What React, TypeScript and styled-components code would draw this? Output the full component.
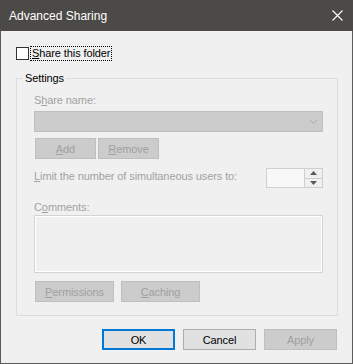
import React from "react";
import styled, { createGlobalStyle } from "styled-components";

const GlobalStyle = createGlobalStyle`
  html, body {
    margin: 0;
    padding: 0;
    background: #ffffff;
  }
  * {
    box-sizing: border-box;
  }
`;

const FONT = `"Liberation Sans", Arial, sans-serif`;

const Window = styled.div`
  width: 353px;
  height: 364px;
  display: flex;
  flex-direction: column;
  font-family: ${FONT};
  font-size: 11px;
`;

const TitleBar = styled.div`
  height: 31px;
  display: flex;
  align-items: center;
  justify-content: space-between;
  padding: 0 10px 0 9px;
  background: #4b4a47;
  color: #ffffff;
  font-size: 12px;
`;

const Body = styled.div`
  flex: 1;
  display: flex;
  flex-direction: column;
  background: #f0f0f0;
  border: 1px solid #5c5c5c;
  border-top: none;
  letter-spacing: -0.1px;
`;

const CheckRow = styled.div`
  display: flex;
  align-items: center;
  margin: 15px 0 0 15px;
  height: 15px;
`;

const CheckBox = styled.span`
  width: 13px;
  height: 13px;
  border: 1px solid #333333;
  background: #ffffff;
`;

const FocusLabel = styled.span`
  margin-left: 1px;
  padding: 0 1px;
  line-height: 13px;
  border: 1px dotted #000000;
  color: #000000;
`;

const Group = styled.fieldset`
  margin: 10px 0 0 15px;
  width: 322px;
  padding: 9px 14px 13px 17px;
  border: 1px solid #dcdcdc;
  display: flex;
  flex-direction: column;
`;

const Legend = styled.legend`
  margin-left: -11px;
  padding: 0 2px;
  line-height: 14px;
  font-size: 11px;
  color: #000000;
`;

const Label = styled.div<{ $top?: number }>`
  margin-top: ${(p) => p.$top ?? 0}px;
  line-height: 13px;
  color: #a2a2a2;
`;

const Combo = styled.div`
  margin-top: 4px;
  height: 21px;
  background: #cccccc;
  border: 1px solid #bfbfbf;
  display: flex;
  align-items: center;
  justify-content: flex-end;
  padding-right: 4px;
`;

const ButtonRow = styled.div<{ $gap: number; $top: number }>`
  display: flex;
  gap: ${(p) => p.$gap}px;
  margin-top: ${(p) => p.$top}px;
  padding-left: 1px;
`;

const DisabledButton = styled.div<{ $w: number }>`
  width: ${(p) => p.$w}px;
  height: 21px;
  display: flex;
  align-items: center;
  justify-content: center;
  background: #cccccc;
  border: 1px solid #bfbfbf;
  color: #a0a0a0;
`;

const LimitRow = styled.div`
  margin-top: 9px;
  height: 20px;
  display: flex;
  justify-content: space-between;
  align-items: flex-start;
`;

const LimitText = styled.span`
  margin-top: 2px;
  line-height: 13px;
  color: #a2a2a2;
  white-space: nowrap;
`;

const Spin = styled.div`
  flex-shrink: 0;
  width: 57px;
  height: 20px;
  display: flex;
  border: 1px solid #cfcfcf;
  background: #f8f8f8;
`;

const SpinField = styled.div`
  flex: 1;
`;

const SpinArrows = styled.div`
  width: 18px;
  display: flex;
  flex-direction: column;
  border-left: 1px solid #cfcfcf;
  background: #f0f0f0;
`;

const SpinHalf = styled.div<{ $bottom?: boolean }>`
  flex: 1;
  display: flex;
  align-items: center;
  justify-content: center;
  border-top: ${(p) => (p.$bottom ? "1px solid #cfcfcf" : "none")};
`;

const TextArea = styled.div`
  margin-top: 1px;
  height: 58px;
  border: 1px solid #d4d4d4;
  box-shadow: inset 0 0 0 1px #ffffff;
  background: #f0f0f0;
`;

const Footer = styled.div`
  margin-top: 13px;
  display: flex;
  justify-content: flex-end;
  gap: 8px;
  padding-right: 15px;
`;

const DialogButton = styled.div<{ $default?: boolean; $disabled?: boolean }>`
  width: 73px;
  height: 21px;
  display: flex;
  align-items: center;
  justify-content: center;
  background: ${(p) => (p.$disabled ? "#cccccc" : "#e1e1e1")};
  border: ${(p) =>
    p.$default
      ? "2px solid #0078d7"
      : p.$disabled
      ? "1px solid #bfbfbf"
      : "1px solid #adadad"};
  color: ${(p) => (p.$disabled ? "#a0a0a0" : "#000000")};
`;

const U = styled.span`
  text-decoration: underline;
`;

const CloseIcon = () => (
  <svg width="11" height="11" viewBox="0 0 11 11">
    <path d="M0.5 0.5 L10.5 10.5 M10.5 0.5 L0.5 10.5" stroke="#ffffff" strokeWidth="1.1" />
  </svg>
);

const Chevron = () => (
  <svg width="9" height="6" viewBox="0 0 9 6">
    <polyline points="0.5,0.5 4.5,4.5 8.5,0.5" fill="none" stroke="#a8a8a8" strokeWidth="1" />
  </svg>
);

const Tri = ({ up }: { up?: boolean }) => (
  <svg width="7" height="4" viewBox="0 0 7 4">
    <polygon points={up ? "0,4 7,4 3.5,0" : "0,0 7,0 3.5,4"} fill="#5a5a5a" />
  </svg>
);

export default function App() {
  return (
    <>
      <GlobalStyle />
      <Window>
        <TitleBar>
          <span>Advanced Sharing</span>
          <CloseIcon />
        </TitleBar>
        <Body>
          <CheckRow>
            <CheckBox />
            <FocusLabel>
              <U>S</U>hare this folder
            </FocusLabel>
          </CheckRow>
          <Group>
            <Legend>Settings</Legend>
            <Label>
              S<U>h</U>are name:
            </Label>
            <Combo>
              <Chevron />
            </Combo>
            <ButtonRow $gap={2} $top={6}>
              <DisabledButton $w={61}>
                <U>A</U>dd
              </DisabledButton>
              <DisabledButton $w={61}>
                <U>R</U>emove
              </DisabledButton>
            </ButtonRow>
            <LimitRow>
              <LimitText>
                <U>L</U>imit the number of simultaneous users to:
              </LimitText>
              <Spin>
                <SpinField />
                <SpinArrows>
                  <SpinHalf>
                    <Tri up />
                  </SpinHalf>
                  <SpinHalf $bottom>
                    <Tri />
                  </SpinHalf>
                </SpinArrows>
              </Spin>
            </LimitRow>
            <Label $top={13}>
              C<U>o</U>mments:
            </Label>
            <TextArea />
            <ButtonRow $gap={7} $top={8}>
              <DisabledButton $w={79}>
                <U>P</U>ermissions
              </DisabledButton>
              <DisabledButton $w={79}>
                <U>C</U>aching
              </DisabledButton>
            </ButtonRow>
          </Group>
          <Footer>
            <DialogButton $default>OK</DialogButton>
            <DialogButton>Cancel</DialogButton>
            <DialogButton $disabled>Apply</DialogButton>
          </Footer>
        </Body>
      </Window>
    </>
  );
}
